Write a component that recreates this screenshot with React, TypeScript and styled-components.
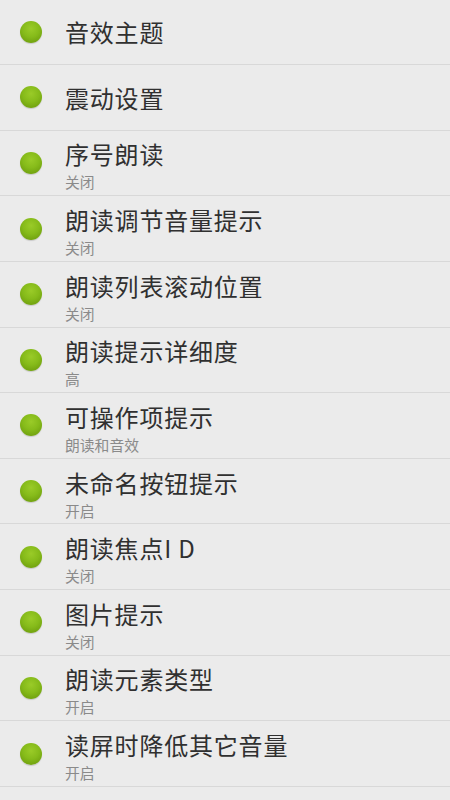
import React from "react";
import styled, { createGlobalStyle } from "styled-components";

const Global = createGlobalStyle`
  html, body {
    margin: 0;
    padding: 0;
    background: #ebebeb;
  }
  body {
    font-family: "Noto Sans CJK SC", "Noto Sans", Roboto, sans-serif;
    overflow: hidden;
  }
`;

const List = styled.div`
  display: flex;
  flex-direction: column;
  width: 450px;
  height: 800px;
  overflow: hidden;
  background: #ebebeb;
  margin-top: -0.6px;
`;

const Row = styled.div`
  display: flex;
  align-items: center;
  flex-shrink: 0;
  height: 64.64px;
  border-bottom: 1px solid #d8d8d8;
  padding-left: 20px;
`;

const Dot = styled.span`
  flex-shrink: 0;
  width: 22px;
  height: 22px;
  border-radius: 50%;
  background: radial-gradient(circle at 50% 35%, #9acb28 0%, #86bb1a 45%, #6e9e0e 85%, #5f8a0c 100%);
  box-shadow: 0 1px 1px rgba(0, 0, 0, 0.15);
`;

const Texts = styled.div<{ $two: boolean }>`
  display: flex;
  flex-direction: column;
  margin-left: 23px;
  padding-top: ${(p) => (p.$two ? "5px" : "1px")};
`;

const Title = styled.div`
  font-size: 24px;
  line-height: 28px;
  color: #303030;
  letter-spacing: 0.8px;
  white-space: nowrap;
`;

const Summary = styled.div`
  font-size: 14.8px;
  line-height: 17px;
  margin-top: 5px;
  color: #8a8a8a;
  white-space: nowrap;
`;

const items: { title: string; summary?: string }[] = [
  { title: "音效主题" },
  { title: "震动设置" },
  { title: "序号朗读", summary: "关闭" },
  { title: "朗读调节音量提示", summary: "关闭" },
  { title: "朗读列表滚动位置", summary: "关闭" },
  { title: "朗读提示详细度", summary: "高" },
  { title: "可操作项提示", summary: "朗读和音效" },
  { title: "未命名按钮提示", summary: "开启" },
  { title: "朗读焦点I D", summary: "关闭" },
  { title: "图片提示", summary: "关闭" },
  { title: "朗读元素类型", summary: "开启" },
  { title: "读屏时降低其它音量", summary: "开启" },
  { title: "朗读屏幕方向变化", summary: "开启" },
];

export default function App() {
  return (
    <>
      <Global />
      <List>
        {items.map((it, i) => (
          <Row key={i}>
            <Dot />
            <Texts $two={!!it.summary}>
              <Title>{it.title}</Title>
              {it.summary && <Summary>{it.summary}</Summary>}
            </Texts>
          </Row>
        ))}
      </List>
    </>
  );
}
